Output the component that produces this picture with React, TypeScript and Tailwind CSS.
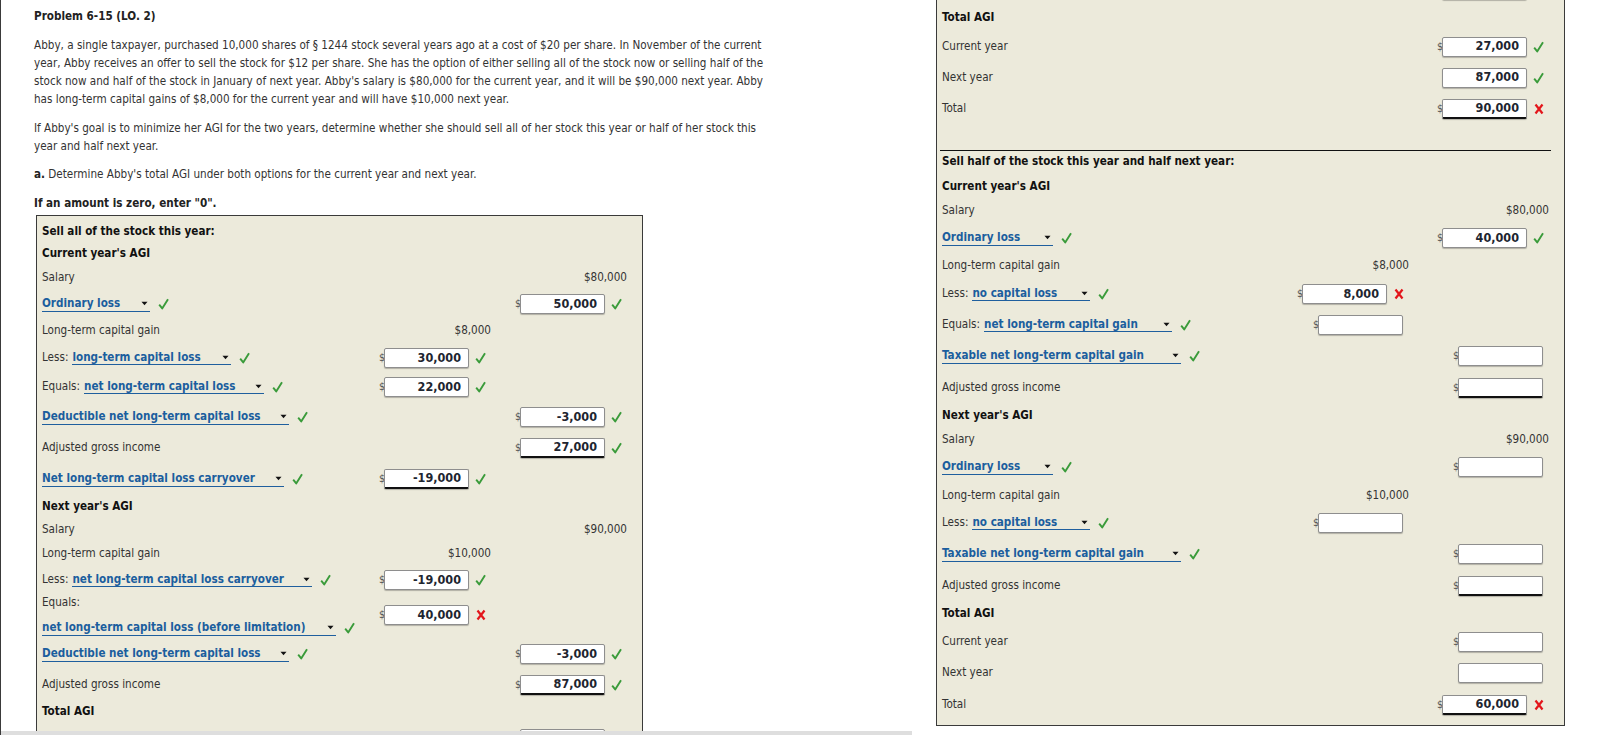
import type { ReactNode } from "react";

type Mark = "ok" | "bad";
type Box = { v: string; mark?: Mark; dollar?: boolean; dark?: boolean };
type Cell = string | Box;
type RowDef = {
  h: string;
  label?: string;
  heading?: boolean;
  prefix?: string;
  drop?: { text: string; w: string };
  stacked?: boolean;
  mid?: Cell;
  right?: Cell;
};

const leftRows: RowDef[] = [
  { h: "h-[24px]", label: "Sell all of the stock this year:", heading: true },
  { h: "h-[20px]", label: "Current year's AGI", heading: true },
  { h: "h-[28px]", label: "Salary", right: "$80,000" },
  { h: "h-[24px]", drop: { text: "Ordinary loss", w: "w-[108px]" }, right: { v: "50,000", mark: "ok" } },
  { h: "h-[30px]", label: "Long-term capital gain", mid: "$8,000" },
  { h: "h-[24px]", prefix: "Less:", drop: { text: "long-term capital loss", w: "w-[159px]" }, mid: { v: "30,000", mark: "ok" } },
  { h: "h-[34px]", prefix: "Equals:", drop: { text: "net long-term capital loss", w: "w-[180px]" }, mid: { v: "22,000", mark: "ok" } },
  { h: "h-[26px]", drop: { text: "Deductible net long-term capital loss", w: "w-[247px]" }, right: { v: "-3,000", mark: "ok" } },
  { h: "h-[36px]", label: "Adjusted gross income", right: { v: "27,000", mark: "ok", dark: true } },
  { h: "h-[26px]", drop: { text: "Net long-term capital loss carryover", w: "w-[242px]" }, mid: { v: "-19,000", mark: "ok", dark: true } },
  { h: "h-[30px]", label: "Next year's AGI", heading: true },
  { h: "h-[16px]", label: "Salary", right: "$90,000" },
  { h: "h-[32px]", label: "Long-term capital gain", mid: "$10,000" },
  { h: "h-[20px]", prefix: "Less:", drop: { text: "net long-term capital loss carryover", w: "w-[240px]" }, mid: { v: "-19,000", mark: "ok" } },
  { h: "h-[50px]", prefix: "Equals:", stacked: true, drop: { text: "net long-term capital loss (before limitation)", w: "w-[294px]" }, mid: { v: "40,000", mark: "bad" } },
  { h: "h-[28px]", drop: { text: "Deductible net long-term capital loss", w: "w-[247px]" }, right: { v: "-3,000", mark: "ok" } },
  { h: "h-[34px]", label: "Adjusted gross income", right: { v: "87,000", mark: "ok", dark: true } },
  { h: "h-[20px]", label: "Total AGI", heading: true },
  { h: "h-[34px]", label: "Current year", right: { v: "27,000", mark: "ok" } },
  { h: "h-[31px]", label: "Next year", right: { v: "87,000", mark: "ok", dollar: false } },
];

const rightRows: RowDef[] = [
  { h: "h-[30px]", label: "Adjusted gross income", right: { v: "87,000", mark: "ok", dark: true } },
  { h: "h-[26px]", label: "Total AGI", heading: true },
  { h: "h-[31px]", label: "Current year", right: { v: "27,000", mark: "ok" } },
  { h: "h-[31px]", label: "Next year", right: { v: "87,000", mark: "ok", dollar: false } },
  { h: "h-[31px]", label: "Total", right: { v: "90,000", mark: "bad", dark: true } },
];

const halfRows: RowDef[] = [
  { h: "h-[22px]", label: "Sell half of the stock this year and half next year:", heading: true },
  { h: "h-[28px]", label: "Current year's AGI", heading: true },
  { h: "h-[20px]", label: "Salary", right: "$80,000" },
  { h: "h-[34px]", drop: { text: "Ordinary loss", w: "w-[111px]" }, right: { v: "40,000", mark: "ok" } },
  { h: "h-[22px]", label: "Long-term capital gain", mid: "$8,000" },
  { h: "h-[34px]", prefix: "Less:", drop: { text: "no capital loss", w: "w-[118px]" }, mid: { v: "8,000", mark: "bad" } },
  { h: "h-[28px]", prefix: "Equals:", drop: { text: "net long-term capital gain", w: "w-[188px]" }, mid: { v: "" } },
  { h: "h-[34px]", drop: { text: "Taxable net long-term capital gain", w: "w-[239px]" }, right: { v: "" } },
  { h: "h-[30px]", label: "Adjusted gross income", right: { v: "", dark: true } },
  { h: "h-[26px]", label: "Next year's AGI", heading: true },
  { h: "h-[22px]", label: "Salary", right: "$90,000" },
  { h: "h-[32px]", drop: { text: "Ordinary loss", w: "w-[111px]" }, right: { v: "" } },
  { h: "h-[26px]", label: "Long-term capital gain", mid: "$10,000" },
  { h: "h-[28px]", prefix: "Less:", drop: { text: "no capital loss", w: "w-[118px]" }, mid: { v: "" } },
  { h: "h-[34px]", drop: { text: "Taxable net long-term capital gain", w: "w-[239px]" }, right: { v: "" } },
  { h: "h-[30px]", label: "Adjusted gross income", right: { v: "", dark: true } },
  { h: "h-[26px]", label: "Total AGI", heading: true },
  { h: "h-[30px]", label: "Current year", right: { v: "" } },
  { h: "h-[32px]", label: "Next year", right: { v: "", dollar: false } },
  { h: "h-[32px]", label: "Total", right: { v: "60,000", mark: "bad", dark: true } },
];

export default function App() {
  return (
    <div className="flex h-[735px] w-[1608px] overflow-hidden bg-white font-['DejaVu_Sans_Condensed','DejaVu_Sans',sans-serif] text-[11.6px] text-[#333]">
      <div className="flex w-[912px] shrink-0 flex-col border-l border-[#3a3a3a]">
        <div className="min-h-0 flex-1 overflow-hidden pl-[33px] pt-[8px]">
          <h1 className="font-bold leading-[16px] text-[#222]">Problem 6-15 (LO. 2)</h1>
          <p className="mt-[12px] whitespace-nowrap leading-[18px]">
            Abby, a single taxpayer, purchased 10,000 shares of § 1244 stock several years ago at a cost of $20 per share. In November of the current
            <br />
            year, Abby receives an offer to sell the stock for $12 per share. She has the option of either selling all of the stock now or selling half of the
            <br />
            stock now and half of the stock in January of next year. Abby's salary is $80,000 for the current year, and it will be $90,000 next year. Abby
            <br />
            has long-term capital gains of $8,000 for the current year and will have $10,000 next year.
          </p>
          <p className="mt-[11px] whitespace-nowrap leading-[18px]">
            If Abby's goal is to minimize her AGI for the two years, determine whether she should sell all of her stock this year or half of her stock this
            <br />
            year and half next year.
          </p>
          <p className="mt-[10px] leading-[18px]">
            <b className="text-[#222]">a.</b> Determine Abby's total AGI under both options for the current year and next year.
          </p>
          <p className="mt-[11px] font-bold leading-[18px] text-[#222]">If an amount is zero, enter "0".</p>
          <div className="ml-[2px] mt-[3px] w-[607px] border border-[#3a3a3a] bg-[#eceadb] pl-[5px] pr-[15px] pt-[4px]">
            {leftRows.map((r, i) => (
              <Row key={i} r={r} rw="w-[136px]" />
            ))}
          </div>
        </div>
        <div className="h-[4px] bg-[#dedede]" />
      </div>

      <div className="ml-[24px] h-[726px] w-[629px] shrink-0 overflow-hidden border-x border-b border-[#3a3a3a] bg-[#eceadb] pl-[5px] pr-[15px]">
        <div className="-mt-[25px]">
          {rightRows.map((r, i) => (
            <Row key={i} r={r} rw="w-[140px]" />
          ))}
          <div className="h-[26px]" />
          <div className="-ml-[2px] -mr-[2px] h-px bg-[#111]" />
          {halfRows.map((r, i) => (
            <Row key={i} r={r} rw="w-[140px]" />
          ))}
        </div>
      </div>
    </div>
  );
}

function Row({ r, rw }: { r: RowDef; rw: string }) {
  let label: ReactNode;
  if (r.heading) {
    label = <span className="whitespace-nowrap font-bold text-[#111]">{r.label}</span>;
  } else if (r.drop && r.stacked) {
    label = (
      <div className="flex flex-col">
        <span className="flex h-[26px] items-center">{r.prefix}</span>
        <span className="flex h-[24px] items-center">
          <Drop text={r.drop.text} w={r.drop.w} />
          <span className="ml-[8px]"><Check /></span>
        </span>
      </div>
    );
  } else if (r.drop) {
    label = (
      <span className="flex items-center">
        {r.prefix && <span className="mr-[4px]">{r.prefix}</span>}
        <Drop text={r.drop.text} w={r.drop.w} />
        <span className="ml-[8px]"><Check /></span>
      </span>
    );
  } else {
    label = <span className="whitespace-nowrap">{r.label}</span>;
  }

  return (
    <div className={`flex items-center ${r.h}`}>
      <div className="flex min-w-0 flex-1 items-center">{label}</div>
      <div className="flex w-[120px] items-center justify-end">{r.mid && <Value c={r.mid} />}</div>
      <div className={`flex items-center justify-end ${rw}`}>{r.right && <Value c={r.right} />}</div>
    </div>
  );
}

function Value({ c }: { c: Cell }) {
  if (typeof c === "string") return <span className="text-[#333]">{c}</span>;
  return (
    <span className="flex items-center">
      {c.dollar !== false && <span className="-mr-px text-[10.5px] text-[#555]">$</span>}
      <span
        className={`flex h-[20px] w-[85px] items-center justify-end rounded-[2px] border border-[#8e8e8e] bg-white pr-[7px] text-[12.5px] font-bold text-[#1e2530] shadow-[0_1px_1px_rgba(0,0,0,0.25)] ${
          c.dark ? "border-b-2 border-b-[#111]" : ""
        }`}
      >
        {c.v}
      </span>
      {c.mark ? (
        <span className="ml-[6px] mr-[5px] flex w-[11px] justify-center">{c.mark === "ok" ? <Check /> : <Cross />}</span>
      ) : (
        <span className="w-[6px]" />
      )}
    </span>
  );
}

function Drop({ text, w }: { text: string; w: string }) {
  return (
    <span className={`flex h-[15px] items-center justify-between border-b border-[#1f5f9e] ${w}`}>
      <span className="whitespace-nowrap font-bold leading-none text-[#1b5e9e]">{text}</span>
      <svg width="7" height="5" viewBox="0 0 7 5" className="mr-[2px] shrink-0">
        <path d="M0.5 0.8h6L3.5 4.3z" fill="#111" />
      </svg>
    </span>
  );
}

function Check() {
  return (
    <svg width="11" height="12" viewBox="0 0 11 12">
      <path d="M1.2 6.6 L4.2 10.4 L10 1.2" fill="none" stroke="#3a9b3a" strokeWidth="1.9" strokeLinejoin="round" />
    </svg>
  );
}

function Cross() {
  return (
    <svg width="10" height="12" viewBox="0 0 10 12">
      <path d="M1.5 1.5 L8.5 10.5 M8.5 1.5 L1.5 10.5" stroke="#e3161b" strokeWidth="2.2" />
    </svg>
  );
}
